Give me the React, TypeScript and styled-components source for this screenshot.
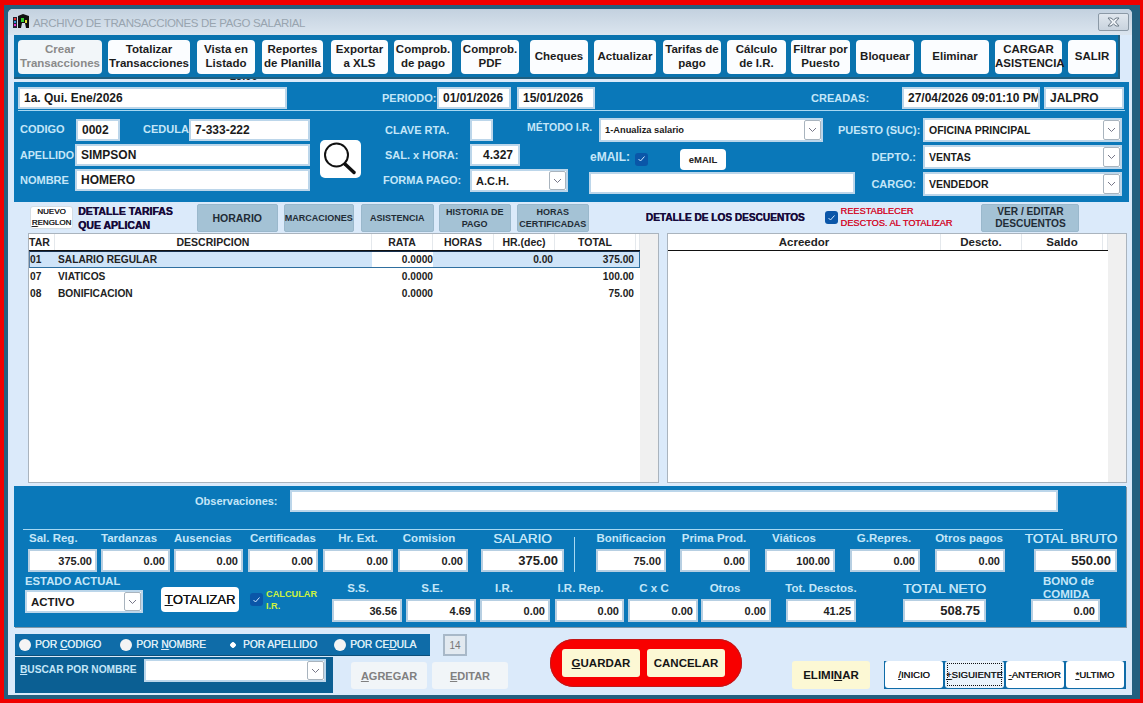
import * as React from 'react';
import styled, { createGlobalStyle } from 'styled-components';

const Global = createGlobalStyle`
    html, body {
        margin: 0;
        padding: 0;
        width: 1143px;
        height: 703px;
        overflow: hidden;
        background: #f00000;
        font-family: "Liberation Sans", Arial, sans-serif;
        color: #111;
    }
    * { box-sizing: border-box; }
`;

const Frame = styled.div`
    width: 1143px;
    height: 703px;
    padding: 5px 3px 4px 4px;
    background: #f00000;
`;

const Outer = styled.div`
    width: 100%;
    height: 100%;
    padding: 4px 8px 4px 4px;
    background: #24607f;
`;

const Window = styled.div`
    width: 100%;
    height: 100%;
    display: flex;
    flex-direction: column;
    padding: 0 0 0 6px;
    border-radius: 5px 5px 0 0;
    background: #dbeafa;
`;

const TitleBar = styled.div`
    height: 26px;
    margin: 0 0 0 -6px;
    padding: 0 3px 0 5px;
    display: flex;
    align-items: center;
    gap: 3px;
    flex: none;
    border-radius: 5px 5px 0 0;
    background: linear-gradient(#c3d1df, #dbe5ef);
`;

const TitleText = styled.span`
    flex: 1;
    font-size: 11.5px;
    letter-spacing: -0.35px;
    color: #98a4af;
    padding-top: 2px;
`;

const CloseBox = styled.div`
    width: 31px;
    height: 18px;
    display: flex;
    align-items: center;
    justify-content: center;
    border: 1px solid #8b99a6;
    border-radius: 2px;
    background: linear-gradient(#e0e7ee, #c8d3de);
`;

const Toolbar = styled.div`
    width: 1106px;
    height: 44px;
    padding: 5px 0 0 4px;
    display: flex;
    flex: none;
    background: #0a73ae;
    border-right: 2px solid #1f5f80;
    border-bottom: 2px solid #1f5f80;
`;

const ToolButton = styled.button<{ $w: number; $ml: number; $off?: boolean }>`
    width: ${(p) => p.$w}px;
    height: 34px;
    margin-left: ${(p) => p.$ml}px;
    padding: 0 0 2px;
    flex: none;
    border: 0;
    border-radius: 4px;
    background: ${(p) => (p.$off ? '#f2f6f9' : '#fbfdff')};
    color: ${(p) => (p.$off ? '#8a8a8a' : '#1c1c1c')};
    font: bold 11.5px/14px "Liberation Sans", Arial, sans-serif;
    white-space: pre-line;
`;

const ClippedStrip = styled.div`
    height: 3px;
    flex: none;
    overflow: hidden;
    padding-left: 216px;
    color: #222;
`;

const ClippedText = styled.span`
    display: block;
    margin-top: -9px;
    font: bold 11px/13px "Liberation Sans", Arial, sans-serif;
`;

const Panel = styled.div<{ $w: number; $h: number; $mt?: number; $edge?: boolean }>`
    width: ${(p) => p.$w}px;
    height: ${(p) => p.$h}px;
    margin-top: ${(p) => p.$mt || 0}px;
    flex: none;
    background: #0a78b9;
    box-shadow: ${(p) => (p.$edge ? '1px 1px 0 #7f97a8' : 'none')};
`;

const Row = styled.div<{ $h: number; $pt?: number }>`
    display: flex;
    align-items: center;
    height: ${(p) => p.$h}px;
    padding-top: ${(p) => p.$pt || 0}px;
`;

const TopRow = styled(Row)`
    margin: 0 4px;
    padding-top: 4px;
    border-bottom: 1px solid #a8d8f2;
`;

const Label = styled.span<{ $w?: number; $ml?: number; $mb?: number; $size?: number; $align?: string; $color?: string }>`
    flex: none;
    width: ${(p) => (p.$w ? `${p.$w}px` : 'auto')};
    margin-left: ${(p) => p.$ml || 0}px;
    margin-bottom: ${(p) => p.$mb || 0}px;
    font-weight: bold;
    font-size: ${(p) => p.$size || 11}px;
    line-height: 13px;
    text-align: ${(p) => p.$align || 'left'};
    color: ${(p) => p.$color || '#c4e6f8'};
    white-space: pre;
`;

const Input = styled.div<{ $w: number; $h?: number; $ml?: number; $right?: boolean; $size?: number }>`
    flex: none;
    width: ${(p) => p.$w}px;
    height: ${(p) => p.$h || 22}px;
    margin-left: ${(p) => p.$ml || 0}px;
    padding: 0 ${(p) => (p.$right ? 5 : 4)}px;
    display: flex;
    align-items: center;
    justify-content: ${(p) => (p.$right ? 'flex-end' : 'flex-start')};
    background: #fff;
    border: 2px solid #bcd6ea;
    font-weight: bold;
    font-size: ${(p) => p.$size || 12}px;
    color: #1a1a1a;
    white-space: nowrap;
    overflow: hidden;
`;

const SelectBox = styled(Input)`
    padding-right: 0;
    justify-content: space-between;
`;

const Caret = styled.span`
    width: 17px;
    height: 100%;
    flex: none;
    display: flex;
    align-items: center;
    justify-content: center;
    background: #fff;
    border: 1px solid #a9b4be;
    border-radius: 2px;
`;

const Check = styled.span<{ $ml?: number; $mt?: number }>`
    flex: none;
    width: 13px;
    height: 13px;
    margin-left: ${(p) => p.$ml || 0}px;
    margin-top: ${(p) => p.$mt || 0}px;
    display: flex;
    align-items: center;
    justify-content: center;
    border-radius: 3px;
    background: #0a56a8;
`;

const FormColumns = styled.div`
    display: flex;
    height: 84px;
    margin-top: 7px;
    padding-left: 4px;
`;

const Stack = styled.div<{ $w: number; $ml?: number; $gap?: number; $pt?: number }>`
    flex: none;
    width: ${(p) => p.$w}px;
    margin-left: ${(p) => p.$ml || 0}px;
    padding-top: ${(p) => p.$pt || 0}px;
    display: flex;
    flex-direction: column;
    gap: ${(p) => p.$gap ?? 3}px;
`;

const SearchButton = styled.div`
    flex: none;
    width: 41px;
    height: 38px;
    margin: 22px 0 0 10px;
    background: #fff;
    border-radius: 5px;
`;

const SmallWhiteButton = styled.div`
    flex: none;
    width: 46px;
    height: 21px;
    margin-left: 32px;
    display: flex;
    align-items: center;
    justify-content: center;
    background: #fff;
    border-radius: 4px;
    font-size: 9.5px;
    font-weight: bold;
    color: #222;
`;

const TabsRow = styled.div`
    height: 31px;
    flex: none;
    display: flex;
    align-items: center;
`;

const NewLine = styled.div`
    flex: none;
    width: 43px;
    height: 23px;
    margin-left: 16px;
    border: 1px solid #d5dde4;
    border-radius: 3px;
    background: #fff;
    font-size: 8px;
    line-height: 10.5px;
    text-align: center;
    color: #222;
    text-shadow: 0.3px 0 0 #222;
`;

const DarkTitle = styled.div<{ $ml: number; $size?: number }>`
    flex: none;
    margin-left: ${(p) => p.$ml}px;
    font-size: ${(p) => p.$size || 10.5}px;
    font-weight: bold;
    line-height: 14px;
    color: #170a3a;
    text-shadow: 0.4px 0 0 #170a3a;
    white-space: pre-line;
`;

const GreyTab = styled.div<{ $w: number; $ml: number; $size?: number }>`
    flex: none;
    width: ${(p) => p.$w}px;
    height: 28px;
    margin-left: ${(p) => p.$ml}px;
    display: flex;
    align-items: center;
    justify-content: center;
    text-align: center;
    background: #a4c2d5;
    border: 1px solid #9ab8cc;
    border-radius: 2px;
    font-size: ${(p) => p.$size || 10}px;
    font-weight: bold;
    line-height: 12px;
    color: #1f2c36;
    white-space: pre-line;
`;

const RedNote = styled.div`
    flex: none;
    margin-left: 3px;
    font-size: 9.2px;
    line-height: 11.5px;
    color: #d3122f;
    text-shadow: 0.2px 0 0 #d3122f;
    white-space: pre-line;
`;

const Tables = styled.div`
    display: flex;
    height: 250px;
    flex: none;
`;

const TableBox = styled.div<{ $w: number; $ml: number }>`
    flex: none;
    width: ${(p) => p.$w}px;
    margin-left: ${(p) => p.$ml}px;
    display: flex;
    background: #fff;
    border: 1px solid #aab4be;
`;

const TableMain = styled.div`
    flex: 1;
    min-width: 0;
`;

const ScrollTrack = styled.div`
    flex: none;
    width: 18px;
    background: #f0f0f0;
`;

const HeadRow = styled.div`
    height: 17px;
    display: flex;
    border-bottom: 1px solid #111;
`;

const HeadCell = styled.div<{ $w?: number; $size?: number; $start?: boolean }>`
    flex: ${(p) => (p.$w ? 'none' : 1)};
    width: ${(p) => (p.$w ? `${p.$w}px` : 'auto')};
    display: flex;
    align-items: center;
    justify-content: ${(p) => (p.$start ? 'flex-start' : 'center')};
    border-right: 1px solid #e4e8ec;
    font-size: ${(p) => p.$size || 10.5}px;
    font-weight: bold;
    color: #222;
`;

const DataRow = styled.div<{ $on?: boolean }>`
    height: 17px;
    display: flex;
    align-items: center;
    border: 1px solid transparent;
    border-top-color: ${(p) => (p.$on ? '#16304f' : 'transparent')};
    border-bottom-color: ${(p) => (p.$on ? '#2f6f9f' : 'transparent')};
    border-left-color: ${(p) => (p.$on ? '#5a7fa5' : 'transparent')};
    border-right-color: ${(p) => (p.$on ? '#2f6f9f' : 'transparent')};
    background: ${(p) => (p.$on ? '#cfe4f8' : '#fff')};
    font-size: 10.2px;
    font-weight: bold;
    color: #222;
`;

const DataCell = styled.div<{ $w: number; $right?: boolean; $white?: boolean }>`
    flex: none;
    width: ${(p) => p.$w}px;
    height: 100%;
    display: flex;
    align-items: center;
    justify-content: ${(p) => (p.$right ? 'flex-end' : 'flex-start')};
    background: ${(p) => (p.$white ? '#fff' : 'transparent')};
`;

const FieldRow = styled.div<{ $mt?: number }>`
    display: flex;
    align-items: flex-end;
    margin-top: ${(p) => p.$mt || 0}px;
`;

const Field = styled.div<{ $w: number; $ml: number }>`
    flex: none;
    width: ${(p) => p.$w}px;
    margin-left: ${(p) => p.$ml}px;
    display: flex;
    flex-direction: column;
    align-items: center;
`;

const FieldLabel = styled.span<{ $big?: boolean; $shift?: number; $start?: number; $mb?: number }>`
    font-size: ${(p) => (p.$big ? 13.5 : 11.5)}px;
    font-weight: ${(p) => (p.$big ? 'normal' : 'bold')};
    line-height: ${(p) => (p.$big ? 17 : 13)}px;
    color: #c4e6f8;
    text-shadow: ${(p) => (p.$big ? '0.3px 0 0 #c4e6f8' : 'none')};
    white-space: pre;
    margin-bottom: ${(p) => p.$mb ?? (p.$big ? 2 : 4)}px;
    margin-right: ${(p) => p.$shift || 0}px;
    align-self: ${(p) => (p.$start !== undefined ? 'flex-start' : 'auto')};
    margin-left: ${(p) => p.$start || 0}px;
`;

const Amount = styled.div<{ $big?: boolean; $w?: number }>`
    width: ${(p) => (p.$w ? `${p.$w}px` : '100%')};
    height: 23px;
    padding-right: ${(p) => (p.$big ? 4 : 3)}px;
    display: flex;
    align-items: center;
    justify-content: flex-end;
    align-self: flex-end;
    background: #fff;
    border: 2px solid #b7cfe2;
    font-size: ${(p) => (p.$big ? 13 : 11)}px;
    font-weight: bold;
    color: #222;
`;

const Observ = styled.div`
    display: flex;
    align-items: center;
    height: 43px;
    padding: 4px 0 17px 181px;
`;

const Divider = styled.div`
    width: 1040px;
    height: 1px;
    margin-left: 9px;
    background: #a8d8f2;
`;

const VLine = styled.div`
    flex: none;
    width: 1px;
    height: 35px;
    margin: 0 0 0 10px;
    background: #a8d8f2;
`;

const EstadoStack = styled(Stack)`
    align-self: flex-start;
`;

const TotalizeButton = styled.div`
    flex: none;
    align-self: flex-start;
    width: 78px;
    height: 25px;
    margin: 12px 0 0 18px;
    display: flex;
    align-items: center;
    justify-content: center;
    background: #fff;
    border-radius: 4px;
    font-size: 13px;
    color: #111;
    text-shadow: 0.3px 0 0 #111;
`;

const TopCheck = styled(Check)`
    align-self: flex-start;
`;

const YellowNote = styled(Label)`
    align-self: flex-start;
    margin-top: 14px;
    line-height: 11.5px;
`;

const U = styled.span`
    text-decoration: underline;
`;

const Footer = styled.div`
    flex: 1;
    display: flex;
    align-items: flex-start;
`;

const FooterLeft = styled.div`
    flex: none;
    width: 452px;
    margin: 7px 0 0 1px;
`;

const RadioLine = styled.div`
    display: flex;
`;

const RadioBar = styled.div`
    flex: none;
    width: 415px;
    height: 22px;
    display: flex;
    align-items: center;
    background: #0f6ca8;
    border-bottom: 1px solid #0c4f7a;
`;

const Radio = styled.span<{ $on?: boolean; $ml: number }>`
    flex: none;
    width: 12px;
    height: 12px;
    margin-left: ${(p) => p.$ml}px;
    margin-right: 4px;
    border-radius: 50%;
    background: ${(p) => (p.$on ? 'radial-gradient(circle, #fff 0 2.5px, transparent 3px)' : '#f4f4f4')};
`;

const RadioText = styled.span`
    flex: none;
    font-size: 10.2px;
    color: #dcecf6;
    text-shadow: 0.3px 0 0 #dcecf6;
`;

const CountBox = styled.div`
    flex: none;
    width: 24px;
    height: 22px;
    margin-left: 13px;
    display: flex;
    align-items: center;
    justify-content: center;
    border: 2px solid #a8b8c8;
    background: #e2e9f0;
    font-size: 10px;
    color: #777;
`;

const SearchLine = styled.div`
    display: flex;
    align-items: flex-start;
    margin-top: 1px;
`;

const SearchBox = styled.div`
    flex: none;
    width: 318px;
    height: 36px;
    padding: 2px 0 0 5px;
    display: flex;
    align-items: flex-start;
    background: #0b5f93;
`;

const SearchLabel = styled(Label)`
    padding-top: 4px;
`;

const FadedButton = styled.div<{ $ml: number }>`
    flex: none;
    width: 76px;
    height: 27px;
    margin-left: ${(p) => p.$ml}px;
    margin-top: 5px;
    display: flex;
    align-items: center;
    justify-content: center;
    background: #f1f5f8;
    border-radius: 3px;
    font-size: 11px;
    font-weight: bold;
    color: #808080;
`;

const RedPill = styled.div`
    flex: none;
    width: 192px;
    height: 48px;
    margin: 12px 0 0 83px;
    padding: 10px 0 0 12px;
    display: flex;
    gap: 7px;
    background: #f80000;
    border-radius: 24px;
    box-shadow: inset 0 0 0 1px #c01818;
`;

const CreamButton = styled.div<{ $w: number; $h?: number; $ml?: number; $mt?: number }>`
    flex: none;
    width: ${(p) => p.$w}px;
    height: ${(p) => p.$h || 28}px;
    margin-left: ${(p) => p.$ml || 0}px;
    margin-top: ${(p) => p.$mt || 0}px;
    display: flex;
    align-items: center;
    justify-content: center;
    background: #fcf8d4;
    border-radius: 3px;
    font-size: 11.5px;
    font-weight: bold;
    color: #151515;
`;

const NavBar = styled.div`
    flex: none;
    width: 242px;
    height: 28px;
    margin: 34px 0 0 14px;
    padding: 0 2px 1px 1px;
    display: flex;
    gap: 2px;
    background: #0f6ca8;
`;

const NavButton = styled.div<{ $focus?: boolean }>`
    flex: 1;
    display: flex;
    align-items: center;
    justify-content: center;
    background: ${(p) => (p.$focus ? '#eaf3fb' : '#fff')};
    border-radius: 3px;
    font-size: 9.5px;
    color: #1c1c1c;
    text-shadow: 0.3px 0 0 #1c1c1c;
    outline: ${(p) => (p.$focus ? '1px dotted #111' : 'none')};
    outline-offset: -3px;
    white-space: nowrap;
`;

const tools = [
    { t: 'Crear\nTransacciones', w: 84, ml: 0, off: true },
    { t: 'Totalizar\nTransacciones', w: 82, ml: 6 },
    { t: 'Vista en\nListado', w: 58, ml: 7 },
    { t: 'Reportes\nde Planilla', w: 61, ml: 7 },
    { t: 'Exportar\na XLS', w: 57, ml: 8 },
    { t: 'Comprob.\nde pago', w: 58, ml: 6 },
    { t: 'Comprob.\nPDF', w: 58, ml: 9 },
    { t: 'Cheques', w: 58, ml: 11 },
    { t: 'Actualizar', w: 62, ml: 6 },
    { t: 'Tarifas de\npago', w: 58, ml: 7 },
    { t: 'Cálculo\nde I.R.', w: 59, ml: 6 },
    { t: 'Filtrar por\nPuesto', w: 59, ml: 5 },
    { t: 'Bloquear', w: 58, ml: 6 },
    { t: 'Eliminar', w: 68, ml: 7 },
    { t: 'CARGAR\nASISTENCIA', w: 67, ml: 6 },
    { t: 'SALIR', w: 48, ml: 6 },
];

const tarifas = [
    { id: '01', name: 'SALARIO REGULAR', total: '375.00', dec: '0.00', on: true },
    { id: '07', name: 'VIATICOS', total: '100.00', dec: '' },
    { id: '08', name: 'BONIFICACION', total: '75.00', dec: '' },
];

const earnings = [
    { l: 'Sal. Reg.', v: '375.00', w: 69, ml: 14, start: 1 },
    { l: 'Tardanzas', v: '0.00', w: 69, ml: 4, start: 0 },
    { l: 'Ausencias', v: '0.00', w: 69, ml: 4, start: 0 },
    { l: 'Certificadas', v: '0.00', w: 70, ml: 5, start: 2 },
    { l: 'Hr. Ext.', v: '0.00', w: 70, ml: 5 },
    { l: 'Comision', v: '0.00', w: 70, ml: 5, shift: 8 },
];

const earnings2 = [
    { l: 'Bonificacion', v: '75.00', w: 70, ml: 21 },
    { l: 'Prima Prod.', v: '0.00', w: 70, ml: 14, shift: 2 },
    { l: 'Viáticos', v: '100.00', w: 70, ml: 15, shift: 12 },
    { l: 'G.Repres.', v: '0.00', w: 70, ml: 15, shift: 2 },
    { l: 'Otros pagos', v: '0.00', w: 70, ml: 15, shift: 2 },
];

const deductions = [
    { l: 'S.S.', v: '36.56', w: 70, ml: 16, shift: 18 },
    { l: 'S.E.', v: '4.69', w: 70, ml: 4, shift: 18 },
    { l: 'I.R.', v: '0.00', w: 70, ml: 4, shift: 22 },
    { l: 'I.R. Rep.', v: '0.00', w: 69, ml: 5, shift: 18 },
    { l: 'C x C', v: '0.00', w: 70, ml: 4, shift: 18 },
    { l: 'Otros', v: '0.00', w: 70, ml: 3, shift: 22 },
    { l: 'Tot. Desctos.', v: '41.25', w: 70, ml: 15 },
];

const Chevron: React.FC = () => (
    <svg width="9" height="6" viewBox="0 0 9 6" fill="none" stroke="#778" strokeWidth="1">
        <path d="M1 1l3.5 3.5L8 1" />
    </svg>
);

const CheckMark: React.FC = () => (
    <svg width="9" height="8" viewBox="0 0 9 8" fill="none" stroke="#cfe8ff" strokeWidth="1">
        <path d="M1.5 4l2 2 4-4.5" />
    </svg>
);

const Combo: React.FC<{ w: number; h?: number; ml?: number; size?: number; text?: string }> = ({ w, h, ml, size, text }) => (
    <SelectBox $w={w} $h={h} $ml={ml} $size={size}>
        <span>{text}</span>
        <Caret>
            <Chevron />
        </Caret>
    </SelectBox>
);

const AppIcon: React.FC = () => (
    <svg width="17" height="16" viewBox="0 0 17 16">
        <rect x="0" y="3" width="4" height="11" fill="#223" />
        <rect x="1" y="4" width="2" height="2" fill="#e33" />
        <rect x="1" y="7" width="2" height="2" fill="#39d" />
        <rect x="1" y="10" width="2" height="2" fill="#e3c" />
        <path d="M5 2l5-2 6 2v12h-3l-1-5h-3l-1 5H5z" fill="#111" />
        <rect x="8" y="4" width="3" height="4" fill="#3c3" />
        <rect x="12" y="6" width="2" height="3" fill="#dd3" />
    </svg>
);

export default function App() {
    return (
        <Frame>
            <Global />
            <Outer>
                <Window>
                    <TitleBar>
                        <AppIcon />
                        <TitleText>ARCHIVO DE TRANSACCIONES DE PAGO SALARIAL</TitleText>
                        <CloseBox>
                            <svg width="13" height="10" viewBox="0 0 13 10" fill="#eef2f6" stroke="#6f7c88" strokeWidth="1">
                                <path d="M1 1h3l2.500 2L9 1h3L8.500 5 12 9H9L6.500 7 4 9H1l3.500-4z" />
                            </svg>
                        </CloseBox>
                    </TitleBar>
                    <Toolbar>
                        {tools.map((b) => (
                            <ToolButton key={b.t} $w={b.w} $ml={b.ml} $off={b.off}>
                                {b.t}
                            </ToolButton>
                        ))}
                    </Toolbar>
                    <ClippedStrip>
                        <ClippedText>25.00</ClippedText>
                    </ClippedStrip>
                    <Panel $w={1115} $h={120}>
                        <TopRow $h={29}>
                            <Input $w={269}>1a. Qui. Ene/2026</Input>
                            <Label $ml={95} $w={55}>PERIODO:</Label>
                            <Input $w={74}>01/01/2026</Input>
                            <Input $w={78} $ml={6}>15/01/2026</Input>
                            <Label $ml={216} $w={91}>CREADAS:</Label>
                            <Input $w={138}>27/04/2026 09:01:10 PM</Input>
                            <Input $w={80} $ml={4}>JALPRO</Input>
                        </TopRow>
                        <FormColumns>
                            <Stack $w={292} $pt={1}>
                                <Row $h={22}>
                                    <Label $w={56} $ml={2} $mb={2}>CODIGO</Label>
                                    <Input $w={44}>0002</Input>
                                    <Label $ml={23} $w={46} $mb={2}>CEDULA</Label>
                                    <Input $w={121}>7-333-222</Input>
                                </Row>
                                <Row $h={22}>
                                    <Label $w={55} $ml={2} $size={10.7}>APELLIDO</Label>
                                    <Input $w={235}>SIMPSON</Input>
                                </Row>
                                <Row $h={22}>
                                    <Label $w={55} $ml={2}>NOMBRE</Label>
                                    <Input $w={235}>HOMERO</Input>
                                </Row>
                            </Stack>
                            <SearchButton>
                                <svg width="41" height="38" viewBox="0 0 41 38" fill="none" stroke="#111">
                                    <circle cx="16.500" cy="15" r="11.500" strokeWidth="2" />
                                    <path d="M25 24l9 8.500" strokeWidth="3.500" strokeLinecap="round" />
                                </svg>
                            </SearchButton>
                            <Stack $w={144} $ml={22} $pt={1}>
                                <Row $h={22}>
                                    <Label $w={85} $ml={2}>CLAVE RTA.</Label>
                                    <Input $w={23} />
                                </Row>
                                <Row $h={22}>
                                    <Label $w={85} $ml={2}>SAL. x HORA:</Label>
                                    <Input $w={50} $right>4.327</Input>
                                </Row>
                                <Row $h={23}>
                                    <Label $w={87}>FORMA PAGO:</Label>
                                    <Combo w={98} h={23} size={11} text="A.C.H." />
                                </Row>
                            </Stack>
                            <Stack $w={300} $gap={2}>
                                <Row $h={24}>
                                    <Label $w={72} $size={10.5} $mb={6}>MÉTODO I.R.</Label>
                                    <Combo w={224} h={24} size={9.3} text="1-Anualiza salario" />
                                </Row>
                                <Row $h={26} $pt={4}>
                                    <Label $ml={63} $w={45} $size={12} $mb={3}>eMAIL:</Label>
                                    <Check>
                                        <CheckMark />
                                    </Check>
                                    <SmallWhiteButton>eMAIL</SmallWhiteButton>
                                </Row>
                                <Row $h={22}>
                                    <Input $w={266} $ml={62} />
                                </Row>
                            </Stack>
                            <Stack $w={285} $ml={11}>
                                <Row $h={24}>
                                    <Label $w={85} $size={11}>PUESTO (SUC):</Label>
                                    <Combo w={199} h={24} size={10.5} text="OFICINA PRINCIPAL" />
                                </Row>
                                <Row $h={24}>
                                    <Label $w={78} $align="right" $size={11}>DEPTO.:</Label>
                                    <Combo w={199} h={24} ml={7} size={10.5} text="VENTAS" />
                                </Row>
                                <Row $h={24}>
                                    <Label $w={78} $align="right" $size={11}>CARGO:</Label>
                                    <Combo w={199} h={24} ml={7} size={10.5} text="VENDEDOR" />
                                </Row>
                            </Stack>
                        </FormColumns>
                    </Panel>
                    <TabsRow>
                        <NewLine>
                            NUEVO
                            <br />
                            <U>R</U>ENGLON
                        </NewLine>
                        <DarkTitle $ml={5}>{'DETALLE TARIFAS\nQUE APLICAN'}</DarkTitle>
                        <GreyTab $w={81} $ml={24} $size={10.5}>HORARIO</GreyTab>
                        <GreyTab $w={70} $ml={6} $size={9}>MARCACIONES</GreyTab>
                        <GreyTab $w={73} $ml={7} $size={9}>ASISTENCIA</GreyTab>
                        <GreyTab $w={72} $ml={5} $size={9}>{'HISTORIA DE\nPAGO'}</GreyTab>
                        <GreyTab $w={72} $ml={6} $size={9}>{'HORAS\nCERTIFICADAS'}</GreyTab>
                        <DarkTitle $ml={57} $size={10.1}>DETALLE DE LOS DESCUENTOS</DarkTitle>
                        <Check $ml={20}>
                            <CheckMark />
                        </Check>
                        <RedNote>{'REESTABLECER\nDESCTOS. AL TOTALIZAR'}</RedNote>
                        <GreyTab $w={98} $ml={29} $size={10.2}>{'VER / EDITAR\nDESCUENTOS'}</GreyTab>
                    </TabsRow>
                    <Tables>
                        <TableBox $w={631} $ml={14}>
                            <TableMain>
                                <HeadRow>
                                    <HeadCell $w={26} $start>TAR</HeadCell>
                                    <HeadCell $w={317}>DESCRIPCION</HeadCell>
                                    <HeadCell $w={61}>RATA</HeadCell>
                                    <HeadCell $w={61}>HORAS</HeadCell>
                                    <HeadCell $w={61}>HR.(dec)</HeadCell>
                                    <HeadCell $w={81}>TOTAL</HeadCell>
                                    <HeadCell />
                                </HeadRow>
                                {tarifas.map((r) => (
                                    <DataRow key={r.id} $on={r.on}>
                                        <DataCell $w={28}>{r.id}</DataCell>
                                        <DataCell $w={314}>{r.name}</DataCell>
                                        <DataCell $w={61} $right $white={r.on}>0.0000</DataCell>
                                        <DataCell $w={120} $right>{r.dec}</DataCell>
                                        <DataCell $w={81} $right>{r.total}</DataCell>
                                    </DataRow>
                                ))}
                            </TableMain>
                            <ScrollTrack />
                        </TableBox>
                        <TableBox $w={460} $ml={8}>
                            <TableMain>
                                <HeadRow>
                                    <HeadCell $w={273} $size={11.5}>Acreedor</HeadCell>
                                    <HeadCell $w={81} $size={11.5}>Descto.</HeadCell>
                                    <HeadCell $w={81} $size={11.5}>Saldo</HeadCell>
                                    <HeadCell />
                                </HeadRow>
                            </TableMain>
                            <ScrollTrack />
                        </TableBox>
                    </Tables>
                    <Panel $w={1112} $h={141} $mt={3} $edge>
                        <Observ>
                            <Label $w={95} $size={11}>Observaciones:</Label>
                            <Input $w={768} />
                        </Observ>
                        <Divider />
                        <FieldRow>
                            {earnings.map((f) => (
                                <Field key={f.l} $w={f.w} $ml={f.ml}>
                                    <FieldLabel $start={f.start} $shift={f.shift}>{f.l}</FieldLabel>
                                    <Amount>{f.v}</Amount>
                                </Field>
                            ))}
                            <Field $w={83} $ml={13}>
                                <FieldLabel $big>SALARIO</FieldLabel>
                                <Amount $big>375.00</Amount>
                            </Field>
                            <VLine />
                            {earnings2.map((f) => (
                                <Field key={f.l} $w={f.w} $ml={f.ml}>
                                    <FieldLabel $shift={f.shift}>{f.l}</FieldLabel>
                                    <Amount>{f.v}</Amount>
                                </Field>
                            ))}
                            <Field $w={92} $ml={20}>
                                <FieldLabel $big>TOTAL BRUTO</FieldLabel>
                                <Amount $big $w={83}>550.00</Amount>
                            </Field>
                        </FieldRow>
                        <FieldRow $mt={3}>
                            <EstadoStack $w={118} $ml={11} $gap={2}>
                                <Label $size={11.3}>ESTADO ACTUAL</Label>
                                <Combo w={118} h={23} size={11.5} text="ACTIVO" />
                            </EstadoStack>
                            <TotalizeButton>
                                <U>T</U>OTALIZAR
                            </TotalizeButton>
                            <TopCheck $ml={11} $mt={18}>
                                <CheckMark />
                            </TopCheck>
                            <YellowNote $ml={3} $w={50} $size={9.2} $color="#cdf23e">{'CALCULAR\nI.R.'}</YellowNote>
                            {deductions.map((f) => (
                                <Field key={f.l} $w={f.w} $ml={f.ml}>
                                    <FieldLabel $shift={f.shift}>{f.l}</FieldLabel>
                                    <Amount>{f.v}</Amount>
                                </Field>
                            ))}
                            <Field $w={83} $ml={47}>
                                <FieldLabel $big>TOTAL NETO</FieldLabel>
                                <Amount $big>508.75</Amount>
                            </Field>
                            <Field $w={69} $ml={45}>
                                <FieldLabel $start={12} $mb={-2}>{'BONO de\nCOMIDA'}</FieldLabel>
                                <Amount>0.00</Amount>
                            </Field>
                        </FieldRow>
                    </Panel>
                    <Footer>
                        <FooterLeft>
                            <RadioLine>
                                <RadioBar>
                                    <Radio $ml={4} />
                                    <RadioText>POR <U>C</U>ODIGO</RadioText>
                                    <Radio $ml={19} />
                                    <RadioText>POR <U>N</U>OMBRE</RadioText>
                                    <Radio $ml={21} $on />
                                    <RadioText>POR APELLIDO</RadioText>
                                    <Radio $ml={17} />
                                    <RadioText>POR CE<U>D</U>ULA</RadioText>
                                </RadioBar>
                                <CountBox>14</CountBox>
                            </RadioLine>
                            <SearchLine>
                                <SearchBox>
                                    <SearchLabel $w={124} $size={10.2}>
                                        <U>B</U>USCAR POR NOMBRE
                                    </SearchLabel>
                                    <Combo w={182} h={23} />
                                </SearchBox>
                                <FadedButton $ml={18}><U>A</U>GREGAR</FadedButton>
                                <FadedButton $ml={5}><U>E</U>DITAR</FadedButton>
                            </SearchLine>
                        </FooterLeft>
                        <RedPill>
                            <CreamButton $w={78}><U>G</U>UARDAR</CreamButton>
                            <CreamButton $w={78}>CANCELAR</CreamButton>
                        </RedPill>
                        <CreamButton $w={78} $ml={50} $mt={34}>ELIMI<U>N</U>AR</CreamButton>
                        <NavBar>
                            <NavButton><U>/</U>INICIO</NavButton>
                            <NavButton $focus><U>+</U>SIGUIENTE</NavButton>
                            <NavButton><U>-</U>ANTERIOR</NavButton>
                            <NavButton><U>*</U>ULTIMO</NavButton>
                        </NavBar>
                    </Footer>
                </Window>
            </Outer>
        </Frame>
    );
}
